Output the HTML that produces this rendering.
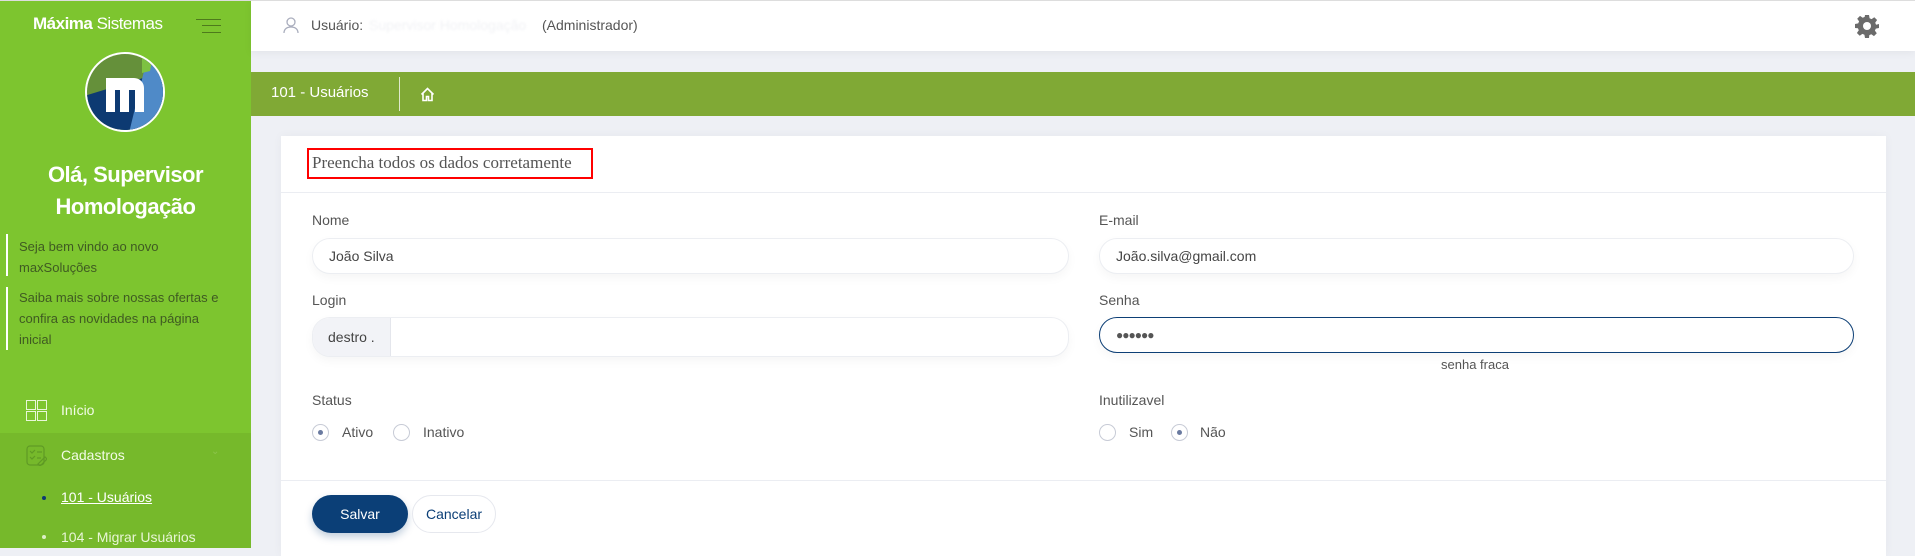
<!DOCTYPE html>
<html><head><meta charset="utf-8"><style>
*{margin:0;padding:0;box-sizing:border-box}
body{width:1915px;height:548px;overflow:hidden;background:#eef0f5;font-family:"Liberation Sans",sans-serif;position:relative;color:#555}
.abs{position:absolute}
#sb{left:0;top:0;width:251px;height:548px;background:#7dc52f;border-top:1px solid #ddd}
#sub{left:0;top:433px;width:251px;height:115px;background:#76b92b}
.t{position:absolute;white-space:nowrap}
#top{left:251px;top:0;width:1664px;height:51px;background:#fff;border-top:1px solid #ddd;box-shadow:0 2px 8px rgba(0,0,0,.05)}
#gb{left:251px;top:72px;width:1664px;height:44px;background:#80a935}
#card{left:281px;top:136px;width:1605px;height:420px;background:#fff;box-shadow:0 0 10px rgba(0,0,0,.04)}
.lbl{font-size:14px;color:#555}
.inp{position:absolute;height:36px;border:1px solid #eceef2;border-radius:18px;background:#fff;box-shadow:0 4px 10px rgba(0,0,0,.04);font-size:14px;color:#444;padding-left:16px;line-height:34px}
.radio{position:absolute;width:17px;height:17px;border:1px solid #c7cbd6;border-radius:50%;background:#fff}
.radio.on::after{content:"";position:absolute;left:5px;top:5px;width:5px;height:5px;border-radius:50%;background:#6a7aa0}
</style></head><body>
<div id="sb" class="abs"></div>
<div id="sub" class="abs"></div>
<div class="t" style="left:33px;top:14px;font-size:17px;color:#fff;letter-spacing:-0.5px"><b>Máxima</b> Sistemas</div>
<div class="abs" style="left:196px;top:19px;width:25px;height:1px;background:#4e7a1c"></div>
<div class="abs" style="left:202px;top:25px;width:19px;height:1px;background:#4e7a1c"></div>
<div class="abs" style="left:202px;top:32px;width:19px;height:1px;background:#4e7a1c"></div>
<svg class="abs" style="left:84px;top:51px" width="82" height="82" viewBox="0 0 82 82">
<defs><clipPath id="c"><circle cx="41" cy="41" r="38"/></clipPath></defs>
<circle cx="41" cy="41" r="40" fill="#fff"/>
<g clip-path="url(#c)">
<rect width="82" height="82" fill="#65903a"/>
<polygon points="0,45 82,20 82,82 0,82" fill="#0d3a72"/>
<polygon points="58,0 82,0 82,82 45,82 60,20" fill="#4f8ac8"/>
<polygon points="58,0 70,0 66,20 58,22" fill="#7dc242"/>
<path d="M22 27 h28 a10 10 0 0 1 10 10 v24 h-9 v-22 h-6 v22 h-9 v-22 h-5 v22 h-9z" fill="#fff"/>
</g></svg>
<div class="t" style="left:0;width:251px;text-align:center;top:159px;font-size:22px;font-weight:bold;color:#fff;line-height:32px;white-space:normal;letter-spacing:-0.5px">Olá, Supervisor<br>Homologação</div>
<div class="abs" style="left:6px;top:234px;width:2px;height:42px;background:#fff"></div>
<div class="abs" style="left:6px;top:287px;width:2px;height:63px;background:#fff"></div>
<div class="t" style="left:19px;top:236px;font-size:13px;line-height:21px;color:#3f5a22;white-space:normal;width:230px">Seja bem vindo ao novo<br>maxSoluções</div>
<div class="t" style="left:19px;top:287px;font-size:13px;line-height:21px;color:#3f5a22;white-space:nowrap;width:232px">Saiba mais sobre nossas ofertas e<br>confira as novidades na página<br>inicial</div>
<svg class="abs" style="left:26px;top:400px" width="21" height="21"><g fill="none" stroke="#e8f7d8" stroke-width="1"><rect x=".5" y=".5" width="9" height="9"/><rect x="11.5" y=".5" width="9" height="9"/><rect x=".5" y="11.5" width="9" height="9"/><rect x="11.5" y="11.5" width="9" height="9"/></g></svg>
<div class="t" style="left:61px;top:402px;font-size:14px;color:#f2fbe6">Início</div>
<svg class="abs" style="left:26px;top:445px" width="21" height="21"><g fill="none" stroke="#5f9a25" stroke-width="1.2"><rect x="1" y="1" width="17" height="19" rx="3"/><path d="M4 6l2 2 3-3M11 7h5M4 12l2 2 3-3M11 13h4M12 19l7-7 2 2-7 7z"/></g></svg>
<div class="t" style="left:61px;top:447px;font-size:14px;color:#f2fbe6">Cadastros</div>
<div class="t" style="left:211px;top:446px;font-size:10px;color:#8cc44c">⌄</div>
<div class="abs" style="left:42px;top:496px;width:4px;height:4px;border-radius:50%;background:#0d3a72"></div>
<div class="t" style="left:61px;top:489px;font-size:14px;color:#fff;text-decoration:underline">101 - Usuários</div>
<div class="abs" style="left:42px;top:535px;width:4px;height:4px;border-radius:50%;background:#dcefc6"></div>
<div class="t" style="left:61px;top:529px;font-size:14px;color:#e8f5d6">104 - Migrar Usuários</div>

<div id="top" class="abs"></div>
<svg class="abs" style="left:283px;top:17px" width="16" height="17"><g fill="none" stroke="#a9adbd" stroke-width="1.3"><circle cx="8" cy="5" r="4"/><path d="M1 16c0-4 3-6 7-6s7 2 7 6"/></g></svg>
<div class="t" style="left:311px;top:17px;font-size:14px;color:#555">Usuário:</div>
<div class="t" style="left:369px;top:17px;font-size:14px;color:#f1f2f5;filter:blur(1px)">Supervisor Homologação</div>
<div class="t" style="left:542px;top:17px;font-size:14px;color:#555">(Administrador)</div>
<svg class="abs" style="left:1855px;top:14px" width="24" height="24" viewBox="0 0 24 24"><path fill="#6b6b6b" d="M10 1h4l.6 3.2 2 .9 2.7-1.9 2.8 2.8-1.9 2.7.9 2L24 10v4l-3.2.6-.9 2 1.9 2.7-2.8 2.8-2.7-1.9-2 .9L14 24h-4l-.6-3.2-2-.9-2.7 1.9-2.8-2.8 1.9-2.7-.9-2L0 14v-4l3.2-.6.9-2L2.2 4.7 5 1.9l2.7 1.9 2-.9z"/><circle cx="12" cy="12" r="4" fill="#fff"/></svg>

<div id="gb" class="abs"></div>
<div class="t" style="left:271px;top:84px;font-size:15px;color:#fff">101 - Usuários</div>
<div class="abs" style="left:399px;top:77px;width:1px;height:34px;background:#dfe9cc"></div>
<svg class="abs" style="left:420px;top:87px" width="15" height="15"><path d="M1.5 7.5L7.5 1.5 13.5 7.5M3 6v7.5h3.5v-4h2v4H12V6" fill="none" stroke="#fff" stroke-width="1.6"/></svg>

<div id="card" class="abs"></div>
<div class="abs" style="left:281px;top:192px;width:1605px;height:1px;background:#ebedf2"></div>
<div class="abs" style="left:307px;top:148px;width:286px;height:31px;border:2px solid #f00"></div>
<div class="t" style="left:312px;top:153px;font-family:'Liberation Serif',serif;font-size:17px;color:#555">Preencha todos os dados corretamente</div>

<div class="t lbl" style="left:312px;top:212px">Nome</div>
<div class="inp" style="left:312px;top:238px;width:757px">João Silva</div>
<div class="t lbl" style="left:312px;top:292px">Login</div>
<div class="inp" style="left:312px;top:317px;width:757px;height:40px;padding-left:0;overflow:hidden"><span style="display:inline-block;width:78px;height:40px;background:#f2f3f7;border-right:1px solid #e4e6ec;padding-left:15px;line-height:38px">destro .</span></div>
<div class="t lbl" style="left:312px;top:392px">Status</div>
<div class="radio on" style="left:312px;top:424px"></div>
<div class="t" style="left:342px;top:424px;font-size:14px">Ativo</div>
<div class="radio" style="left:393px;top:424px"></div>
<div class="t" style="left:423px;top:424px;font-size:14px">Inativo</div>

<div class="t lbl" style="left:1099px;top:212px">E-mail</div>
<div class="inp" style="left:1099px;top:238px;width:755px">João.silva@gmail.com</div>
<div class="t lbl" style="left:1099px;top:292px">Senha</div>
<div class="inp" style="left:1099px;top:317px;width:755px;border:1.5px solid #0d3f76;font-size:12px;color:#555;letter-spacing:-1px">●●●●●●</div>
<div class="t" style="left:1441px;top:357px;font-size:13px;color:#555">senha fraca</div>
<div class="t lbl" style="left:1099px;top:392px">Inutilizavel</div>
<div class="radio" style="left:1099px;top:424px"></div>
<div class="t" style="left:1129px;top:424px;font-size:14px">Sim</div>
<div class="radio on" style="left:1171px;top:424px"></div>
<div class="t" style="left:1200px;top:424px;font-size:14px">Não</div>

<div class="abs" style="left:281px;top:480px;width:1605px;height:1px;background:#ebedf2"></div>
<div class="abs" style="left:312px;top:495px;width:96px;height:38px;border-radius:19px;background:#0b3f77;color:#fff;font-size:14px;text-align:center;line-height:38px;box-shadow:0 4px 8px rgba(11,63,119,.25)">Salvar</div>
<div class="abs" style="left:412px;top:495px;width:84px;height:38px;border-radius:19px;border:1px solid #e6e8ee;color:#0b3f77;font-size:14px;text-align:center;line-height:36px;background:#fff">Cancelar</div>
</body></html>
